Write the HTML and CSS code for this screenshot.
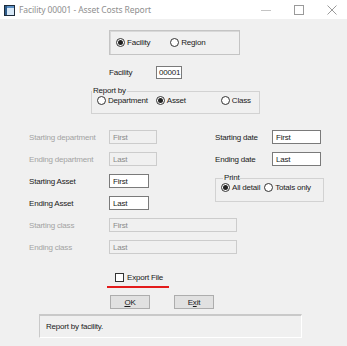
FILE: index.html
```html
<!DOCTYPE html>
<html>
<head>
<meta charset="utf-8">
<link rel="stylesheet" href="styles.css">
</head>
<body>
<div class="window">
  <div class="titlebar">
    <svg class="app-icon" width="11" height="11" viewBox="0 0 11 11">
      <rect x="0.5" y="0.5" width="10" height="10" fill="#d7e8f7" stroke="#1d2b3a"/>
      <rect x="1" y="1" width="2" height="9" fill="#2e5c8a"/>
      <rect x="3" y="1" width="7" height="2" fill="#5b8fc4"/>
    </svg>
    <span class="title">Facility 00001 - Asset Costs Report</span>
    <div class="win-controls">
      <svg width="10" height="10" viewBox="0 0 10 10"><line x1="0" y1="5.5" x2="10" y2="5.5" stroke="#c4c4c4" stroke-width="1"/></svg>
      <svg width="10" height="10" viewBox="0 0 10 10"><rect x="0.5" y="0.5" width="9" height="9" fill="none" stroke="#9a9a9a"/></svg>
      <svg width="10" height="10" viewBox="0 0 10 10"><path d="M0.5 0.5 L9.5 9.5 M9.5 0.5 L0.5 9.5" stroke="#9a9a9a" stroke-width="1"/></svg>
    </div>
  </div>
  <div class="client">
    <div class="scope-box">
      <label class="radio"><span class="circle checked"></span>Facility</label>
      <label class="radio region"><span class="circle"></span>Region</label>
    </div>
    <div class="facility-row">
      <span class="lbl">Facility</span>
      <span class="input facility-input">00001</span>
    </div>
    <fieldset class="group reportby">
      <legend>Report by</legend>
      <label class="radio dept"><span class="circle"></span>Department</label>
      <label class="radio asset"><span class="circle checked"></span>Asset</label>
      <label class="radio cls"><span class="circle"></span>Class</label>
    </fieldset>
    <div class="middle">
      <div class="left-col">
        <span class="lbl disabled">Starting department</span><span class="input disabled-input w48">First</span>
        <span class="lbl disabled">Ending department</span><span class="input disabled-input w48">Last</span>
        <span class="lbl">Starting Asset</span><span class="input w40">First</span>
        <span class="lbl">Ending Asset</span><span class="input w40">Last</span>
      </div>
      <div class="right-col">
        <div class="date-grid">
          <span class="lbl">Starting date</span><span class="input w49">First</span>
          <span class="lbl">Ending date</span><span class="input w49">Last</span>
        </div>
        <fieldset class="group print">
          <legend>Print</legend>
          <label class="radio"><span class="circle checked"></span>All detail</label>
          <label class="radio totals"><span class="circle"></span>Totals only</label>
        </fieldset>
      </div>
    </div>
    <div class="class-grid">
      <span class="lbl disabled">Starting class</span><span class="input disabled-input w128">First</span>
      <span class="lbl disabled">Ending class</span><span class="input disabled-input w128">Last</span>
    </div>
    <div class="export-row">
      <label class="check"><span class="box"></span>Export File</label>
    </div>
    <div class="red-line"></div>
    <div class="buttons">
      <button class="btn"><u>O</u>K</button>
      <button class="btn">E<u>x</u>it</button>
    </div>
    <div class="status">Report by facility.</div>
  </div>
</div>
</body>
</html>
```
FILE: styles.css
```css
* { box-sizing: border-box; }
html, body { margin: 0; padding: 0; background: #f0f0f0; }
body { font-family: "Liberation Sans", Arial, sans-serif; font-size: 8px; letter-spacing: -0.2px; color: #1a1a1a; }
.window { width: 347px; height: 346px; overflow: hidden; background: #f0f0f0; }

.titlebar { height: 19px; background: #fff; display: flex; align-items: center; padding-left: 4px; }
.app-icon { display: block; margin-top: 1px; }
.title { font-family: "Noto Sans", "Open Sans", sans-serif; font-size: 8.5px; color: #8f8f8f; margin-left: 4px; letter-spacing: -0.1px; }
.win-controls { margin-left: auto; display: flex; align-items: center; gap: 23px; padding-right: 10px; }
.win-controls svg { display: block; }

.client { padding-top: 11px; display: flex; flex-direction: column; }

.radio { display: flex; align-items: center; white-space: nowrap; }
.circle { width: 9px; height: 9px; border: 1px solid #333; border-radius: 50%; background: #fff; margin-right: 2px; display: flex; align-items: center; justify-content: center; flex: none; }
.circle.checked::after { content: ""; width: 5px; height: 5px; border-radius: 50%; background: #222; }

.scope-box { margin-left: 109px; width: 131px; height: 25px; border: 1px solid #c4c4c4; box-shadow: inset 1px 1px 0 #d8d8d8; display: flex; align-items: center; padding-left: 6px; }
.scope-box .region { margin-left: 20px; }

.facility-row { margin-top: 11px; height: 13px; display: flex; align-items: center; padding-left: 109px; }
.facility-row .lbl { width: 47px; }

.input { display: flex; align-items: center; height: 14px; border: 1px solid #7a7a7a; background: #fff; padding-left: 3px; }
.facility-input { width: 26px; height: 13px; padding-left: 2px; }
.disabled-input { border-color: #cccccc; background: #f0f0f0; color: #8a8a8a; }
.w48 { width: 48px; }
.w40 { width: 40px; }
.w49 { width: 49px; }
.w128 { width: 128px; }
.lbl { white-space: nowrap; }
.disabled { color: #a3a3a3; }

.group { margin: 0; border: 1px solid #d2d2d2; padding: 0; min-width: 0; }
.group legend { padding: 0 1px; margin-left: 0; line-height: 10px; }

.reportby { margin-top: 7px; margin-left: 91px; width: 169px; height: 28px; display: flex; align-items: center; padding-left: 5px; padding-bottom: 2px; }
.reportby legend { margin-left: -5px; }
.reportby .asset { margin-left: 8px; }
.reportby .cls { margin-left: 35px; }

.middle { margin-top: 16px; display: flex; }
.left-col { padding-left: 29px; width: 214px; display: grid; grid-template-columns: 80px auto; grid-auto-rows: 14px; row-gap: 8px; align-items: center; align-content: start; }
.left-col .input { justify-self: start; }
.right-col { padding-left: 1px; display: flex; flex-direction: column; }
.date-grid { display: grid; grid-template-columns: 57px 49px; grid-auto-rows: 14px; row-gap: 8px; align-items: center; }
.print { margin-top: 7px; width: 109px; height: 29px; display: flex; align-items: center; padding-left: 5px; padding-bottom: 2px; }
.print legend { margin-left: 2px; }
.print .totals { margin-left: 4px; }

.class-grid { margin-top: 8px; padding-left: 29px; display: grid; grid-template-columns: 80px auto; grid-auto-rows: 14px; row-gap: 8px; align-items: center; }
.class-grid .input { justify-self: start; }

.export-row { margin-top: 19px; padding-left: 115px; height: 9px; display: flex; align-items: center; }
.check { display: flex; align-items: center; }
.box { width: 9px; height: 9px; border: 1px solid #333; background: #fff; margin-right: 3px; }
.red-line { margin-top: 4px; margin-left: 107px; width: 62px; height: 2px; background: #e31b1b; }

.buttons { margin-top: 7px; display: flex; padding-left: 110px; gap: 24px; }
.btn { width: 40px; height: 14px; font-family: "Liberation Sans", Arial, sans-serif; font-size: 8px; letter-spacing: -0.2px; color: #1a1a1a; background: #e1e1e1; border: 1px solid #adadad; padding: 0; display: flex; align-items: center; justify-content: center; }

.status { margin-top: 5px; margin-left: 39px; width: 263px; height: 24px; border-top: 2px solid #c9c9c9; border-left: 1px solid #c9c9c9; border-right: 1px solid #fff; border-bottom: 1px solid #fff; display: flex; align-items: center; padding-left: 6px; }
```
